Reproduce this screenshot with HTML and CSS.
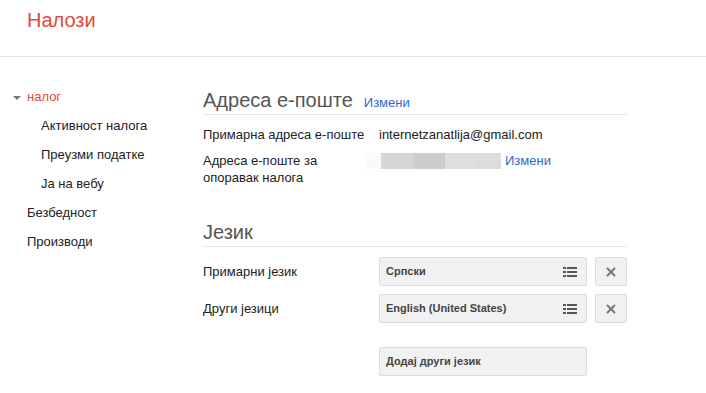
FILE: index.html
```html
<!DOCTYPE html>
<html lang="sr">
<head>
    <meta charset="UTF-8">
    <title>Налози</title>
    <link rel="stylesheet" href="styles.css">
</head>
<body>
    <div class="header">
        <div class="brand">Налози</div>
    </div>

    <div class="page">
        <ul class="nav">
            <li class="nav-item active"><span class="caret"></span>налог</li>
            <li class="nav-item sub">Активност налога</li>
            <li class="nav-item sub">Преузми податке</li>
            <li class="nav-item sub">Ја на вебу</li>
            <li class="nav-item">Безбедност</li>
            <li class="nav-item">Производи</li>
        </ul>

        <div class="main">
            <div class="section">
                <div class="section-title">
                    <h2>Адреса е-поште</h2>
                    <a class="link">Измени</a>
                </div>
                <div class="row">
                    <div class="label">Примарна адреса е-поште</div>
                    <div class="value">internetzanatlija@gmail.com</div>
                </div>
                <div class="row">
                    <div class="label">Адреса е-поште за<br>опоравак налога</div>
                    <div class="value recovery">
                        <span class="blur">
                            <span class="px p1"></span><span class="px p2"></span><span class="px p3"></span><span class="px p4"></span><span class="px p5"></span>
                        </span>
                        <a class="link">Измени</a>
                    </div>
                </div>
            </div>

            <div class="section lang">
                <div class="section-title">
                    <h2>Језик</h2>
                </div>
                <div class="row field">
                    <div class="label">Примарни језик</div>
                    <div class="select">Српски
                        <svg class="list-icon" width="14" height="10" viewBox="0 0 14 10"><rect x="0" y="0" width="3" height="2"/><rect x="4" y="0" width="10" height="2"/><rect x="0" y="4" width="3" height="2"/><rect x="4" y="4" width="10" height="2"/><rect x="0" y="8" width="3" height="2"/><rect x="4" y="8" width="10" height="2"/></svg>
                    </div>
                    <div class="remove">
                        <svg width="10" height="10" viewBox="0 0 10 10"><path d="M1 1 L9 9 M9 1 L1 9" stroke="#777" stroke-width="2"/></svg>
                    </div>
                </div>
                <div class="row field">
                    <div class="label">Други језици</div>
                    <div class="select">English (United States)
                        <svg class="list-icon" width="14" height="10" viewBox="0 0 14 10"><rect x="0" y="0" width="3" height="2"/><rect x="4" y="0" width="10" height="2"/><rect x="0" y="4" width="3" height="2"/><rect x="4" y="4" width="10" height="2"/><rect x="0" y="8" width="3" height="2"/><rect x="4" y="8" width="10" height="2"/></svg>
                    </div>
                    <div class="remove">
                        <svg width="10" height="10" viewBox="0 0 10 10"><path d="M1 1 L9 9 M9 1 L1 9" stroke="#777" stroke-width="2"/></svg>
                    </div>
                </div>
                <div class="row field add-row">
                    <div class="label"></div>
                    <div class="select add">Додај други језик</div>
                </div>
            </div>
        </div>
    </div>
</body>
</html>
```

FILE: styles.css
```css
body {
    margin: 0;
    font-family: Arial, "Liberation Sans", sans-serif;
    font-size: 13px;
    color: #222;
    background: #fff;
}
.header {
    height: 56px;
    border-bottom: 1px solid #e5e5e5;
}
.brand {
    padding: 9px 0 0 27px;
    font-size: 20px;
    color: #dd4b39;
}
.page {
    display: flex;
}
.nav {
    list-style: none;
    margin: 0;
    padding: 31px 0 0 0;
    width: 203px;
}
.nav-item {
    position: relative;
    height: 29px;
    line-height: 18px;
    padding-left: 27px;
    color: #222;
}
.nav-item.sub {
    padding-left: 41px;
}
.nav-item.active {
    color: #dd4b39;
}
.caret {
    position: absolute;
    left: 13px;
    top: 8px;
    border-left: 4px solid transparent;
    border-right: 4px solid transparent;
    border-top: 4px solid #777;
}
.main {
    width: 424px;
    padding-top: 30px;
}
.section-title {
    display: flex;
    align-items: baseline;
    gap: 11px;
    height: 27px;
    border-bottom: 1px solid #e5e5e5;
    margin-bottom: 11px;
}
.section-title h2 {
    margin: 0;
    font-size: 20px;
    font-weight: normal;
    color: #555;
    line-height: 27px;
}
.link {
    color: #3366cc;
    cursor: pointer;
}
.row {
    display: flex;
    line-height: 17px;
    margin-bottom: 9px;
}
.label {
    width: 176px;
    flex: none;
}
.value.recovery {
    display: flex;
    align-items: center;
    margin-left: -14px;
    align-self: flex-start;
    gap: 4px;
}
.blur {
    display: flex;
    height: 16px;
}
.px { display: block; height: 16px; }
.p1 { width: 16px; background: #fafafa; }
.p2 { width: 32px; background: #d6d6d6; }
.p3 { width: 32px; background: #cdcdcd; }
.p4 { width: 32px; background: #dedede; }
.p5 { width: 24px; background: #dcdcdc; }

.section.lang {
    margin-top: 33px;
}
.lang .section-title {
    margin-bottom: 10px;
}
.row.field {
    align-items: center;
    margin-bottom: 8px;
}
.select {
    position: relative;
    width: 200px;
    height: 27px;
    line-height: 27px;
    padding-left: 6px;
    background: #f1f1f1;
    border: 1px solid #dcdcdc;
    border-radius: 2px;
    font-size: 11px;
    font-weight: bold;
    color: #444;
}
.list-icon {
    position: absolute;
    right: 9px;
    top: 9px;
    fill: #555;
}
.remove {
    width: 30px;
    height: 27px;
    margin-left: 8px;
    background: #f1f1f1;
    border: 1px solid #dcdcdc;
    border-radius: 2px;
    display: flex;
    align-items: center;
    justify-content: center;
}
.add-row {
    margin-top: 24px;
}
```
